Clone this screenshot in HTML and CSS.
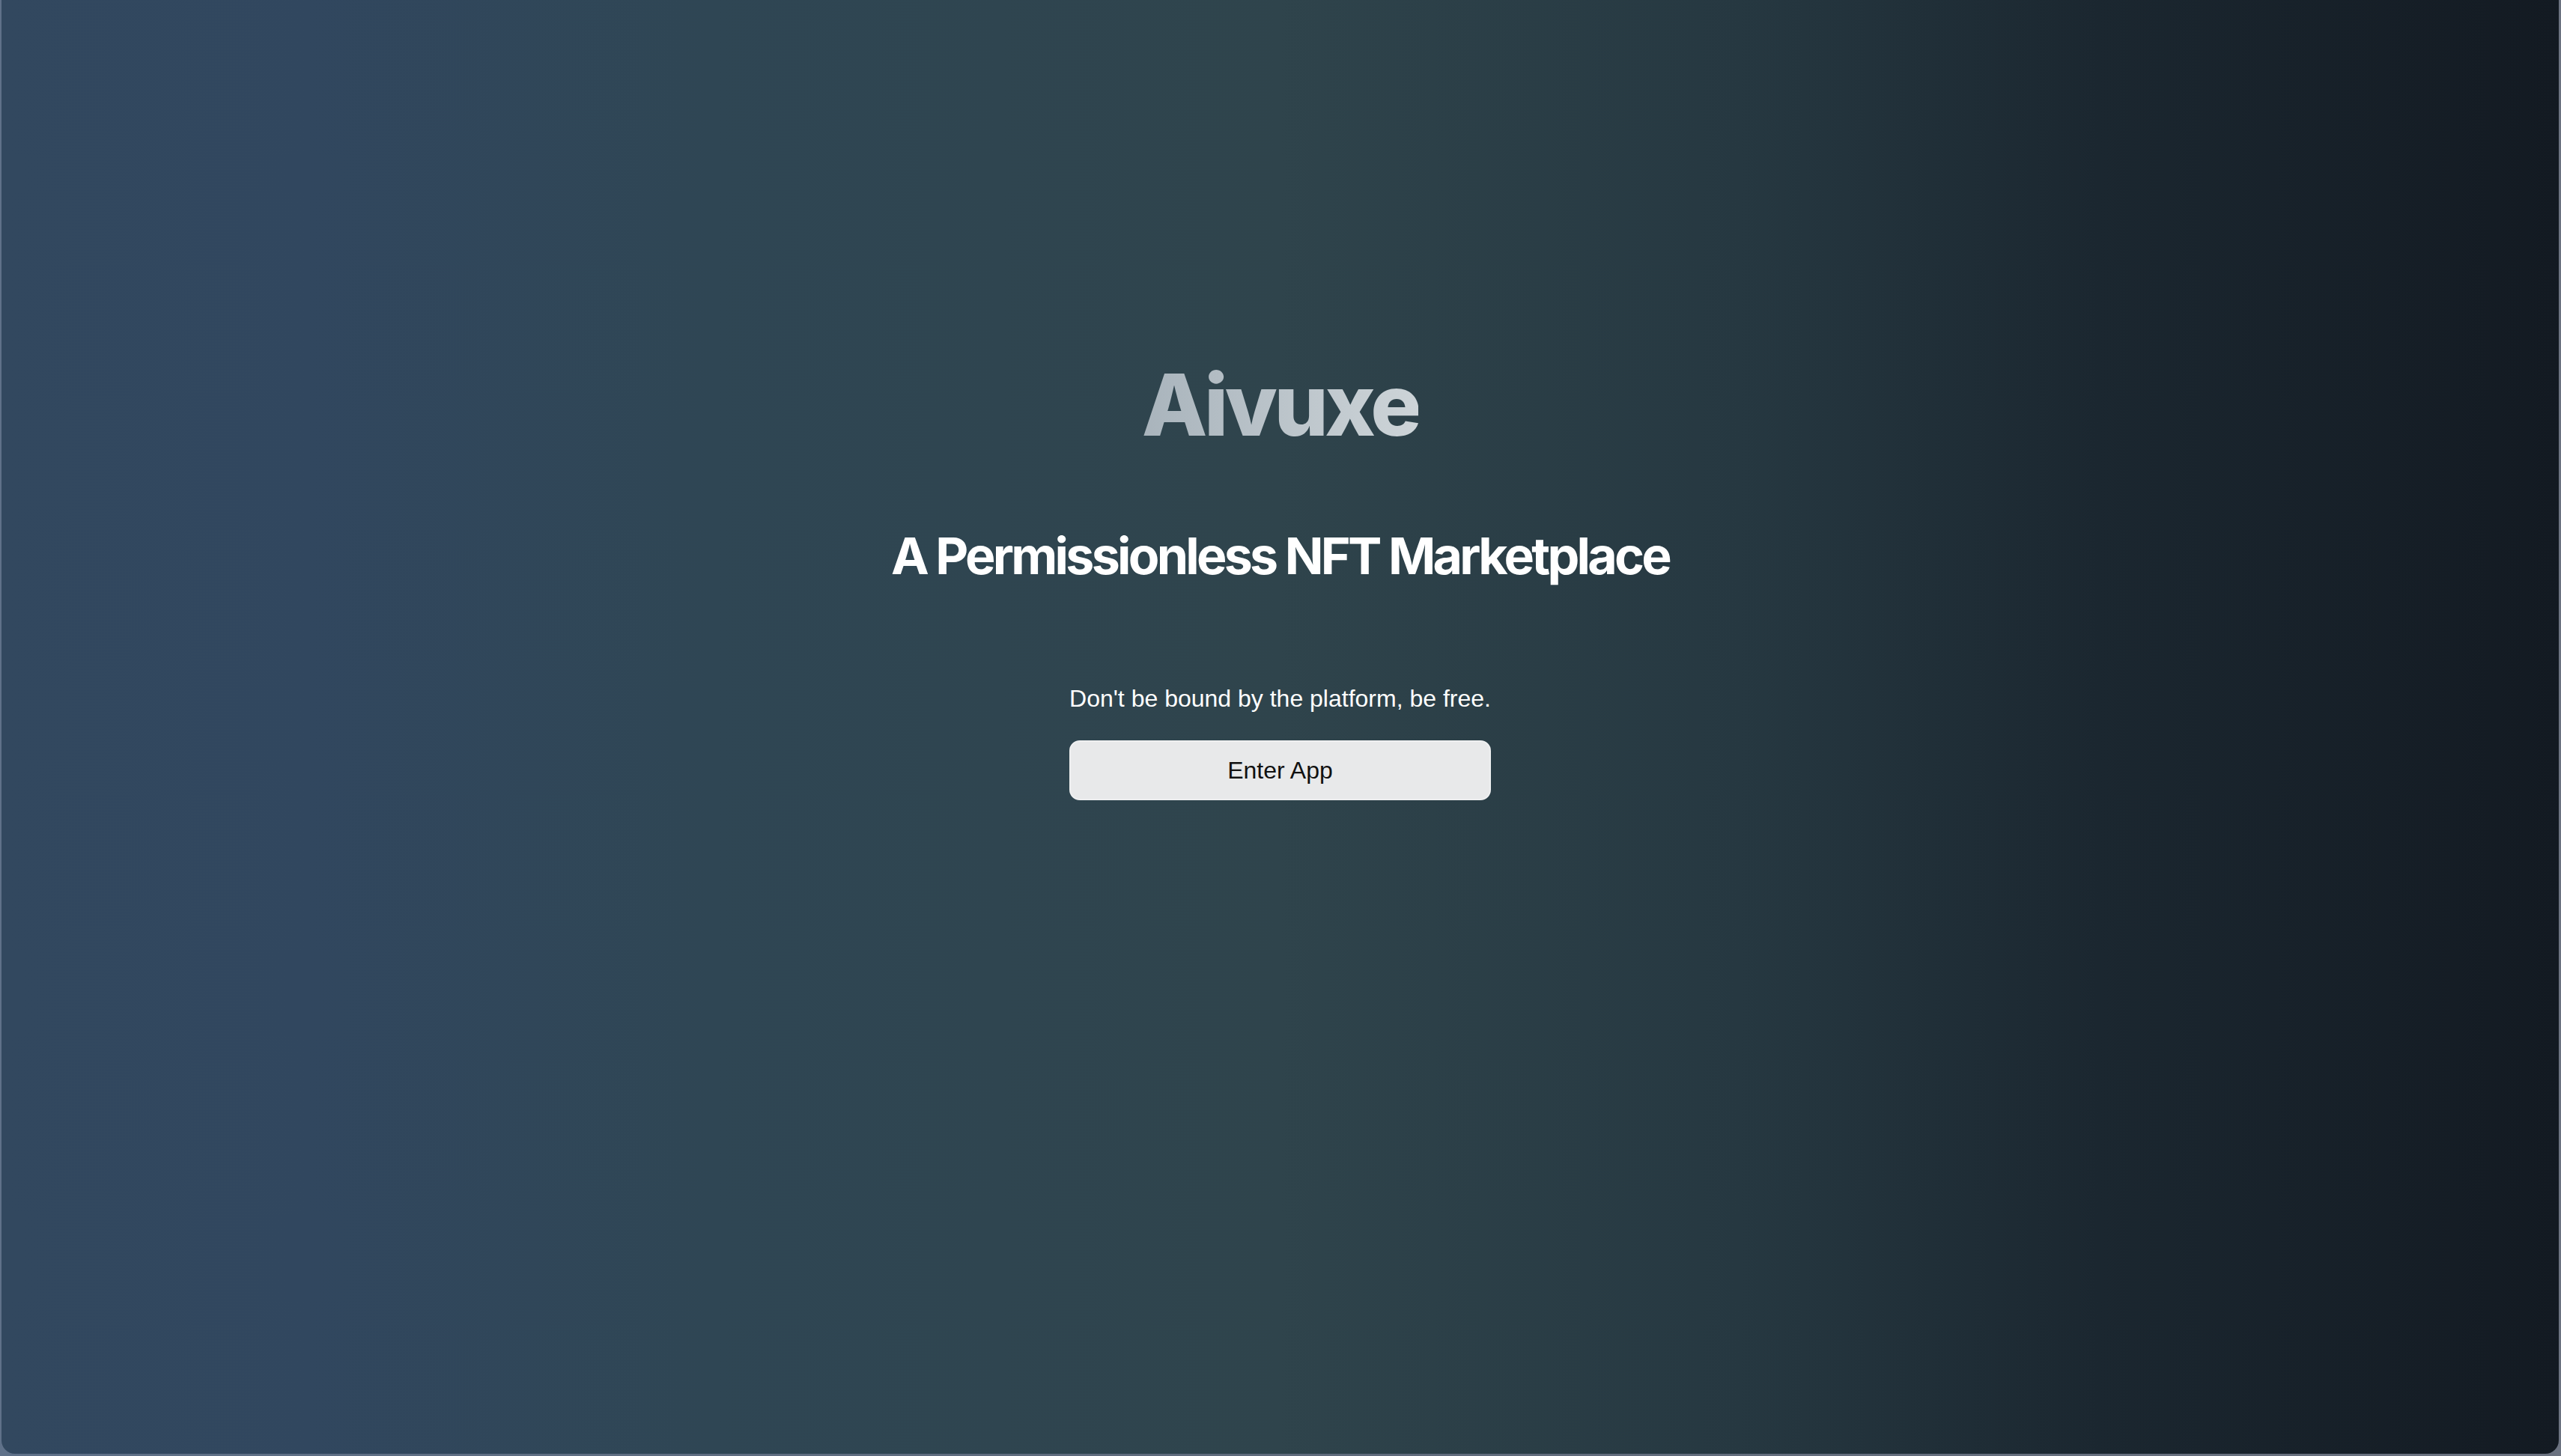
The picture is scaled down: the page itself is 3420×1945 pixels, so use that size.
FILE: index.html
```html
<!DOCTYPE html>
<html lang="en">
<head>
<meta charset="utf-8">
<title>Aivuxe</title>
<link rel="stylesheet" href="styles.css">
</head>
<body>
<div class="frame">
  <main class="app">
    <section class="hero">
      <h1 class="brand">Aivuxe</h1>
      <h2 class="tagline">A Permissionless NFT Marketplace</h2>
      <div class="cta">
        <p class="lead">Don't be bound by the platform, be free.</p>
        <button class="enter" type="button">Enter App</button>
      </div>
    </section>
  </main>
</div>
</body>
</html>
```

FILE: styles.css
```css
html, body {
  margin: 0;
  padding: 0;
  height: 100%;
}

body {
  background: #5f6a7a;
}

.frame {
  box-sizing: border-box;
  height: 100vh;
  padding: 0 3px 3px 2px;
  background: linear-gradient(to right, #5f7189 0%, #5f6b7c 50%, #6b7280 100%);
}

.app {
  box-sizing: border-box;
  height: 100%;
  border-radius: 0 0 18px 18px;
  background: linear-gradient(to right,
    #32485f 0%,
    #31475f 12%,
    #2f4654 28%,
    #2f444c 50%,
    #263841 68%,
    #1b2730 82%,
    #131a22 100%);
  display: flex;
  justify-content: center;
}

.hero {
  display: flex;
  flex-direction: column;
  align-items: center;
  padding-top: 484px;
}

.brand {
  margin: 0;
  font-family: Inter, "Noto Sans", sans-serif;
  font-weight: 800;
  font-size: 114px;
  line-height: 1;
  letter-spacing: -0.04em;
  background: linear-gradient(to right, #a9b4bc, #cdd4d8);
  -webkit-background-clip: text;
  background-clip: text;
  color: transparent;
}

.tagline {
  margin: 110px 0 0;
  font-family: Inter, "Noto Sans", sans-serif;
  font-weight: 700;
  font-size: 68px;
  line-height: 1;
  letter-spacing: -0.055em;
  color: #ffffff;
}

.cta {
  margin-top: 141px;
  display: flex;
  flex-direction: column;
  align-items: stretch;
}

.lead {
  margin: 0;
  font-family: "Liberation Sans", Arial, sans-serif;
  font-size: 32px;
  line-height: 1;
  color: #ffffff;
}

.enter {
  margin-top: 40px;
  height: 80px;
  border: 2px solid #eeeff0;
  border-radius: 14px;
  background: #e8e9ea;
  font-family: "Liberation Sans", Arial, sans-serif;
  font-size: 32px;
  color: #111111;
  cursor: pointer;
}
```
